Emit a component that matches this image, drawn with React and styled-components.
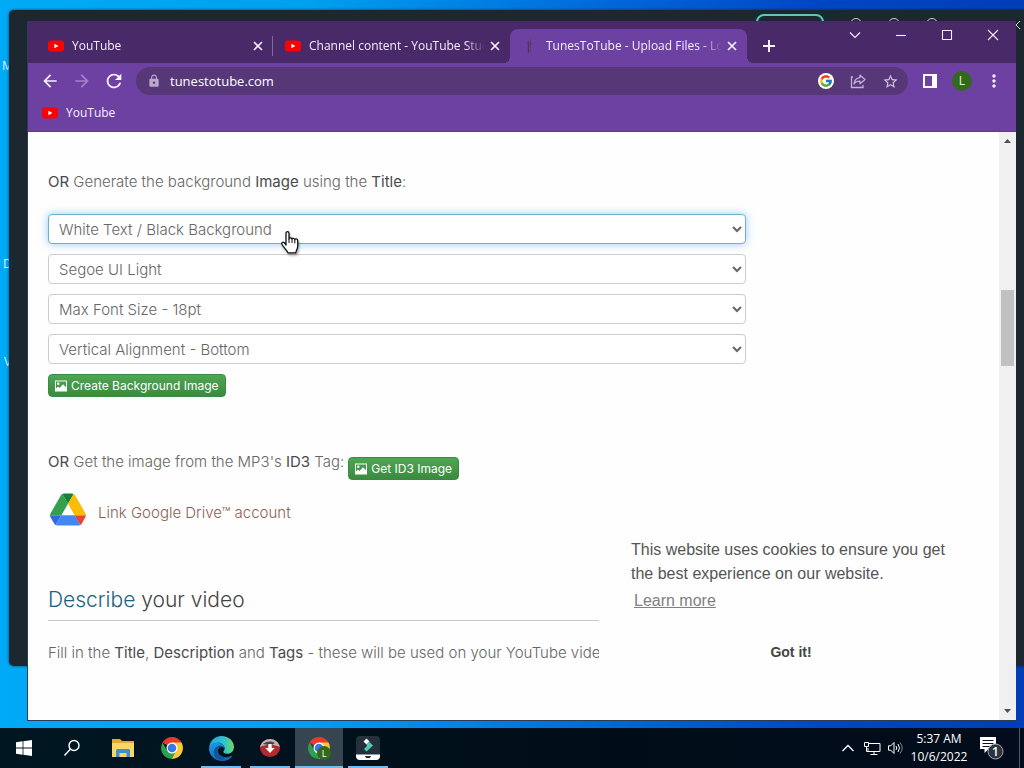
import React, { useState } from 'react'
import styled, { createGlobalStyle, css } from 'styled-components'
import {
  MdArrowBack,
  MdArrowForward,
  MdLock,
  MdMoreVert,
  MdRefresh,
  MdStarBorder,
} from 'react-icons/md'
import { FcGoogle } from 'react-icons/fc'

const uiFont = '"Open Sans", "Noto Sans", sans-serif'
const pageFont = 'Inter, "Open Sans", sans-serif'

const GlobalStyle = createGlobalStyle`
  *, *::before, *::after {
    box-sizing: border-box;
  }
  body {
    margin: 0;
    font-family: ${uiFont};
    font-size: 12px;
  }
  button {
    font-family: inherit;
    border: 0;
    padding: 0;
    background: none;
    color: inherit;
  }
  svg {
    display: block;
    flex: none;
  }
`

/* ---------- desktop ---------- */

const Screen = styled.div`
  display: flex;
  flex-direction: column;
  height: 100vh;
  overflow: hidden;
  background: linear-gradient(90deg, #00aaf6 0%, #00a0f0 30%, #0067da 60%, #0046c4 80%, #003eb8 100%);
`

const Desktop = styled.main`
  position: relative;
  flex: 1;
  min-height: 0;
  overflow: hidden;
`

const DesktopLabel = styled.span`
  position: absolute;
  left: ${props => props.$x}px;
  top: ${props => props.$y}px;
  line-height: 16px;
  color: #dff2ff;
`

const BackWindow = styled.div`
  position: absolute;
  inset: 10px -8px 62px 9px;
  background: #1c2730;
  border-radius: 5px;
  box-shadow: 0 0 3px rgba(0, 20, 40, 0.7);
`

const BackToolbar = styled.div`
  display: flex;
  justify-content: flex-end;
  gap: 26px;
  padding: 4px 11px 0 0;
`

const BackPill = styled.span`
  width: 68px;
  height: 24px;
  border: 2px solid #5fc4bd;
  border-radius: 8px;
`

const BackDot = styled.span`
  width: 12px;
  height: 12px;
  margin-top: 4px;
  border: 1px solid #c9d0d6;
  border-radius: 50%;
`

const BackClose = styled.svg`
  margin: 6px 0 0 47px;
`

const Browser = styled.section`
  position: absolute;
  inset: 21px 8px 7px 27px;
  display: flex;
  flex-direction: column;
  border: 1px solid #2b3a55;
  border-width: 0 0 1px 1px;
  background: #fff;
`

/* ---------- browser chrome ---------- */

const TabStrip = styled.div`
  display: flex;
  align-items: flex-end;
  height: 42px;
  padding-left: 8px;
  background: #4a2968;
  color: #f5ecff;
`

const activeTab = css`
  background: #6d41a2;

  &::before,
  &::after {
    content: '';
    position: absolute;
    bottom: 0;
    width: 6px;
    height: 6px;
  }
  &::before {
    right: 100%;
    background: radial-gradient(circle at 0 0, transparent 6px, #6d41a2 6px);
  }
  &::after {
    left: 100%;
    background: radial-gradient(circle at 100% 0, transparent 6px, #6d41a2 6px);
  }
`

const tabDivider = css`
  &::after {
    content: '';
    position: absolute;
    right: 0;
    top: 7px;
    width: 1px;
    height: 20px;
    background: #8169a0;
  }
`

const Tab = styled.div`
  position: relative;
  display: flex;
  align-items: center;
  flex: 0 1 237px;
  min-width: 0;
  height: 34px;
  padding: 0 7px 0 12px;
  border-radius: 8px 8px 0 0;
  ${props => props.$active && activeTab}
  ${props => props.$divider && tabDivider}
`

const TabTitle = styled.span`
  flex: 1;
  min-width: 0;
  margin: 0 2px 0 8px;
  line-height: 18px;
  white-space: nowrap;
  overflow: hidden;
  mask-image: linear-gradient(90deg, #000 calc(100% - 20px), transparent);
`

const IconButton = styled.button`
  display: flex;
  align-items: center;
  justify-content: center;
  flex: none;
  width: ${props => props.$w || 32}px;
  height: ${props => props.$h || 28}px;
  color: ${props => props.$color || '#f7f0ff'};
`

const WindowControls = styled.div`
  display: flex;
  align-self: flex-start;
  margin-left: auto;
`

const Toolbar = styled.div`
  display: flex;
  align-items: center;
  height: 36px;
  padding: 0 6px;
  background: #6d41a2;
`

const Omnibox = styled.div`
  display: flex;
  align-items: center;
  flex: 1;
  min-width: 0;
  height: 28px;
  margin: 0 6px;
  padding: 0 2px 0 11px;
  border-radius: 14px;
  background: #573778;
  color: #b9a9cb;
`

const Address = styled.input`
  flex: 1;
  min-width: 0;
  margin-left: 9px;
  padding: 0;
  border: 0;
  outline: 0;
  background: none;
  color: #fff;
  font: 13px/20px ${uiFont};
`

const Avatar = styled.span`
  width: 20px;
  height: 20px;
  border-radius: 50%;
  background: #33691e;
  color: #e8f3e0;
  font-size: 12px;
  line-height: 20px;
  text-align: center;
`

const Bookmarks = styled.div`
  display: flex;
  height: 33px;
  padding: 0 14px 5px;
  background: #6d41a2;
  border-bottom: 1px solid #64398f;
`

const Bookmark = styled.a`
  display: flex;
  align-items: center;
  gap: 8px;
  color: #f7f0ff;
  text-decoration: none;
`

/* ---------- page ---------- */

const Viewport = styled.div`
  position: relative;
  display: flex;
  flex: 1;
  min-height: 0;
`

const Page = styled.div`
  flex: 1;
  min-width: 0;
  overflow: hidden;
  padding: 40px 20px 0;
  background: #fefefe;
  color: #666;
  font: 300 15px/20px ${pageFont};

  strong {
    font-weight: 400;
    color: #4a4a4a;
  }
`

const Text = styled.p`
  margin: 0;
  white-space: nowrap;
`

const Form = styled.form`
  display: flex;
  flex-direction: column;
  align-items: flex-start;
  gap: 10px;
  max-width: 698px;
  margin: 22px 0 55px;
`

const Select = styled.select`
  width: 100%;
  height: 30px;
  padding: 4px 4px 4px 6px;
  border: 1px solid ${props => (props.$focus ? '#6fb0cf' : '#ccc')};
  border-radius: 4px;
  outline: 0;
  background-color: #fff;
  box-shadow: ${props => (props.$focus ? '0 0 8px rgba(82, 168, 236, 0.6)' : 'none')};
  color: #666;
  font: 300 15px/20px ${pageFont};
`

const GreenButton = styled.button`
  display: flex;
  align-items: center;
  gap: 4px;
  height: 23px;
  padding: 0 6px;
  border: 1px solid #3c8a40;
  border-radius: 4px;
  background: linear-gradient(#4fa653, #3b8a3f);
  color: #fff;
  font: 400 12px/20px ${pageFont};
`

const TagRow = styled.div`
  display: flex;
  gap: 4px;
  height: 28px;
  margin-bottom: 12px;

  ${GreenButton} {
    align-self: flex-end;
  }
`

const DriveLink = styled.a`
  display: flex;
  align-items: flex-end;
  gap: 12px;
  width: fit-content;
  height: 34px;
  padding: 0 2px;
  color: #8c5f57;
  line-height: 26px;
  text-decoration: none;
`

const Heading = styled.h2`
  margin: 54px 0 22px;
  border-bottom: 1px solid #c8c8c8;
  color: #444;
  font: 300 21px/40px ${pageFont};

  span {
    color: #1b6180;
  }
`

const Scrollbar = styled.div`
  display: flex;
  flex-direction: column;
  align-items: center;
  width: 17px;
  background: #f0f0f0;
`

const ScrollSpace = styled.div`
  flex: ${props => props.$grow} 1 0;
`

const Thumb = styled.div`
  width: 13px;
  height: 76px;
  background: #c1c1c1;
`

const CookieNotice = styled.aside`
  position: absolute;
  right: 17px;
  bottom: 0;
  width: 400px;
  height: 204px;
  padding: 22px 48px 0 32px;
  background: #fefefe;
  color: #555;
  font: 16px/24px "Liberation Sans", Arial, sans-serif;

  p {
    margin: 0;
  }
  a {
    display: inline-block;
    padding: 3px;
    color: #808080;
    text-decoration: underline;
  }
`

const GotIt = styled.button`
  display: block;
  width: 100%;
  margin-top: 21px;
  color: #444;
  font: bold 14px/30px "Liberation Sans", Arial, sans-serif;
`

const HandCursor = styled.svg`
  position: absolute;
  left: 252px;
  top: 98px;
  filter: drop-shadow(1px 2px 1px rgba(0, 0, 0, 0.35));
`

/* ---------- taskbar ---------- */

const Taskbar = styled.footer`
  display: flex;
  align-items: stretch;
  height: 40px;
  background: linear-gradient(90deg, #001722, #000d18 60%, #020c1c);
  color: #fff;
`

const TaskGroup = styled.div`
  display: flex;
  gap: ${props => props.$gap || 0}px;
  margin-right: 3px;
`

const TaskButton = styled.button`
  display: flex;
  flex-direction: column;
  align-items: center;
  justify-content: center;
  position: relative;
  width: 48px;
  background: ${props => (props.$active ? '#36454f' : 'transparent')};

  &::after {
    content: '';
    position: absolute;
    bottom: 0;
    width: ${props => (props.$active ? 48 : 40)}px;
    height: 2px;
    background: ${props => (props.$open ? '#76b9ed' : 'transparent')};
  }
`

const Tray = styled.div`
  display: flex;
  align-items: center;
  margin-left: auto;
  padding-right: 4px;
`

const Clock = styled.time`
  width: 62px;
  line-height: 18px;
  text-align: center;
`

const ShowDesktop = styled.span`
  width: 1px;
  height: 40px;
  margin-left: 7px;
  background: #4c5763;
`

/* ---------- drawings ---------- */

const YouTubeIcon = () => (
  <svg width="16" height="16" viewBox="0 0 16 16">
    <rect y="2.5" width="16" height="11" rx="3" fill="#f00" />
    <path d="M6.4 5.7v4.6l4-2.3z" fill="#fff" />
  </svg>
)

const TunesIcon = () => (
  <svg width="16" height="16" viewBox="0 0 16 16" stroke="#4c3a55" fill="none">
    <path d="M6.5 3v12" strokeWidth="1.4" />
    <path d="M8.5 1v12M4.5 5.5h6" opacity="0.6" />
  </svg>
)

const ShareIcon = () => (
  <svg width="18" height="18" viewBox="0 0 18 18" fill="none" stroke="#c3b1d6" strokeWidth="1.3">
    <path d="M4 5H2.5v10.500H14V13" />
    <path d="M11 3.200l5 4.300-5 4.300V9.200C8 9.200 6.200 10 5 12c.3-3.400 2.200-6 6-6.400z" strokeLinejoin="round" />
  </svg>
)

const SidePanelIcon = () => (
  <svg width="14" height="14" viewBox="0 0 14 14">
    <rect x="1" y="1" width="12" height="12" fill="none" stroke="#fff" strokeWidth="2" />
    <rect x="9" width="5" height="14" fill="#fff" />
  </svg>
)

const PictureIcon = () => (
  <svg width="12" height="12" viewBox="0 0 12 12">
    <rect x="0.5" y="1" width="11" height="10" fill="none" stroke="#fff" />
    <circle cx="3.3" cy="3.8" r="1.2" fill="#fff" />
    <path d="M1 11V8.500l2-2 1.500 1.500L8 4.200l3 3V11z" fill="#fff" />
  </svg>
)

const DriveIcon = () => (
  <svg width="36" height="33" viewBox="0 0 87.3 78">
    <path d="M6.600 66.850l3.850 6.650c.8 1.400 1.950 2.500 3.300 3.300L27.500 53H0c0 1.550.4 3.100 1.200 4.500z" fill="#2f6be0" />
    <path d="M43.650 25L29.900 1.200c-1.350.8-2.500 1.900-3.300 3.300L1.200 48.500A9 9 0 0 0 0 53h27.500z" fill="#34a04f" />
    <path d="M73.550 76.800c1.350-.8 2.500-1.900 3.300-3.300l8.850-16c.8-1.400 1.200-2.950 1.200-4.500H59.800l5.850 11.500z" fill="#ea4335" />
    <path d="M43.650 25L57.400 1.200C56.050.4 54.500 0 52.900 0H34.400c-1.600 0-3.150.45-4.500 1.200z" fill="#188038" />
    <path d="M59.800 53H27.500L13.750 76.800c1.350.8 2.900 1.200 4.500 1.200h50.800c1.600 0 3.150-.45 4.500-1.200z" fill="#4285f4" />
    <path d="M73.400 26.500L60.700 4.500c-.8-1.400-1.950-2.500-3.300-3.300L43.650 25 59.800 53h27.450c0-1.550-.4-3.100-1.200-4.500z" fill="#fbbc04" />
  </svg>
)

const WindowsLogo = () => (
  <svg width="16" height="16" viewBox="0 0 16 16" fill="#fff">
    <path d="M0 2.200l6.600-.9v6.300H0zM7.400 1.200L16 0v7.600H7.400zM0 8.400h6.600v6.300L0 13.800zM7.400 8.400H16V16l-8.600-1.200z" />
  </svg>
)

const SearchIcon = () => (
  <svg width="18" height="18" viewBox="0 0 18 18" fill="none" stroke="#fff" strokeWidth="1.4">
    <circle cx="11" cy="6.5" r="5" />
    <path d="M7.500 10L1.500 16.500" />
  </svg>
)

const FolderIcon = () => (
  <svg width="22" height="18" viewBox="0 0 22 18">
    <path d="M0 0h8l2 2h12v4H0z" fill="#e8a92f" />
    <path d="M0 4h22v14H0z" fill="#fbd568" />
    <path d="M4 18v-6.500a1.500 1.500 0 0 1 1.500-1.500h11a1.500 1.500 0 0 1 1.500 1.500V18h-3.500v-4h-7v4z" fill="#3f8fc9" />
  </svg>
)

const ChromeIcon = ({ badge }) => (
  <svg width="24" height="24" viewBox="0 0 24 24">
    <path d="M12 12L2.500 6.500A11 11 0 0 1 21.500 6.500z" fill="#e33b2e" />
    <path d="M12 12V6.500h9.500A11 11 0 0 1 12 23z" fill="#fcc934" />
    <path d="M2.500 6.500L7.300 14.700 12 17l3.700-1.500L12 23A11 11 0 0 1 2.500 6.500z" fill="#2ba24c" />
    <circle cx="12" cy="12" r="5.5" fill="#fff" />
    <circle cx="12" cy="12" r="4.3" fill="#3b78e7" />
    {badge && (
      <>
        <circle cx="17" cy="17" r="7" fill="#33691e" />
        <text x="17" y="20.5" fill="#fff" fontSize="9" textAnchor="middle">{badge}</text>
      </>
    )}
  </svg>
)

const EdgeIcon = () => (
  <svg width="25" height="25" viewBox="0 0 24 24">
    <defs>
      <linearGradient id="edgeTop" x1="0" y1="0.5" x2="1" y2="0.5">
        <stop offset="0" stopColor="#1fa6e0" />
        <stop offset="0.6" stopColor="#35c1d0" />
        <stop offset="1" stopColor="#66dc60" />
      </linearGradient>
      <linearGradient id="edgeBody" x1="0" y1="0" x2="0.6" y2="1">
        <stop offset="0" stopColor="#1b9de2" />
        <stop offset="1" stopColor="#1567b8" />
      </linearGradient>
    </defs>
    <path d="M0 12C.5 5 5.500 0 12 0c7 0 12 5 12 10.500 0 4-3 6.500-6.500 6.500-2.500 0-3.800-.8-3.800-1.800 0-.8 1.300-1.200 1.300-3.200C15 9 12 6.500 8.500 6.500 4.500 6.500 1.500 8.500 0 12z" fill="url(#edgeTop)" />
    <path d="M0 12c1-3.500 4-5.500 8-5.500 4 0 7 2.500 7 5.500-.5-1-1.700-1.700-3-1.700-2 0-3.500 1.700-3.500 4.200 0 3.500 3.500 6 7.500 6 2.500 0 4.500-.8 5.500-1.500.5-.3.900.1.600.6C20 22.500 16.500 24 12.500 24 5.500 24 0 18.500 0 12z" fill="url(#edgeBody)" />
    <path d="M8.500 14.500c0 3.500 3.500 6 7.500 6-1.500 2-3.500 3-5 3C7 22.500 4.500 19 4.500 15.500c0-3 2-5.200 4.500-6.200 1.300-.4 4.500-.3 6 2.700-.5-1-1.700-1.700-3-1.700-2 0-3.500 1.700-3.500 4.200z" fill="#125699" />
  </svg>
)

const DownloaderIcon = () => (
  <svg width="22" height="20" viewBox="0 0 22 20">
    <ellipse cx="11" cy="10" rx="10" ry="9" fill="#b5292e" />
    <path d="M1.200 9C2 4 6.500 1 11 1s9 3 9.800 8c-2.500-1.500-6-2-9.800-2s-7.300.5-9.800 2z" fill="#b9b5b6" />
    <path d="M4 6C7 3 13 2.500 16 5l-4 2.500z" fill="#4a4144" />
    <path d="M9.300 6h3.400v4h3L11 15l-4.700-5h3z" fill="#fff" />
  </svg>
)

const FilmoraIcon = () => (
  <svg width="24" height="24" viewBox="0 0 24 24">
    <rect width="24" height="24" rx="4" fill="#24313c" />
    <path d="M0 18.500h24V20a4 4 0 0 1-4 4H4a4 4 0 0 1-4-4z" fill="#fff" />
    <path d="M7.500 5.500l3-3 3 3-3 3z" fill="#fff" />
    <path d="M10.500 8.500l3-2.500 3.500 3.500-6.500 6-2.500-2.500 3-3z" fill="#55c8b8" />
    <path d="M9 20h6l-1 2h-4z" fill="#24313c" />
  </svg>
)

const ChevronUp = () => (
  <svg width="12" height="8" viewBox="0 0 12 8" fill="none" stroke="#fff" strokeWidth="1.3">
    <path d="M0.500 7L6 1.500 11.500 7" />
  </svg>
)

const NetworkIcon = () => (
  <svg width="17" height="15" viewBox="0 0 17 15" fill="none" stroke="#fff">
    <path d="M5 2.500h11v8H4V7M10 10.500v3M6.500 13.500h7" />
    <path d="M0.500 1.500h4v4h-4zM2.500 5.500v5h1.500" />
  </svg>
)

const SpeakerIcon = () => (
  <svg width="16" height="14" viewBox="0 0 16 14" fill="none" stroke="#fff">
    <path d="M0.500 4.800h2.300L6 1.500v11L2.800 9.200H.5z" />
    <path d="M8 5q1.500 2 0 4M10 3q3 4 0 8" />
    <path d="M12 1.500q4.500 5.500 0 11" stroke="#7f8791" />
  </svg>
)

const NotificationIcon = () => (
  <svg width="25" height="26" viewBox="0 0 25 26">
    <path d="M1 2h16v12H9.500L5.500 18v-4H1z" fill="#fff" />
    <path d="M3.500 5.500h11M3.500 8.500h11M3.500 11.500h7" stroke="#0a1420" />
    <circle cx="16.5" cy="16.5" r="7.5" fill="#2c343e" stroke="#a5acb4" />
    <text x="16.5" y="20.5" fill="#fff" fontSize="12" fontWeight="600" textAnchor="middle">1</text>
  </svg>
)

const LineGlyph = ({ d, weight = 1.1 }) => (
  <svg width="12" height="12" viewBox="0 0 12 12" fill="none" stroke="#f7f0ff" strokeWidth={weight}>
    <path d={d} />
  </svg>
)

const tabs = [
  { title: 'YouTube', icon: <YouTubeIcon />, divider: true },
  { title: 'Channel content - YouTube Studio', icon: <YouTubeIcon /> },
  { title: 'TunesToTube - Upload Files - Logged in', icon: <TunesIcon />, active: true },
]

const controls = [
  ['Search tabs', 'M1 3.500l5 5 5-5'],
  ['Minimize', 'M1 6.500h10'],
  ['Maximize', 'M1.500 1.500h9v9h-9z'],
  ['Close window', 'M1 1l10 10M11 1L1 11'],
]

const imageOptions = [
  { label: 'Colours', value: 'White Text / Black Background' },
  { label: 'Font', value: 'Segoe UI Light' },
  { label: 'Font size', value: 'Max Font Size - 18pt' },
  { label: 'Alignment', value: 'Vertical Alignment - Bottom' },
]

const apps = [
  { name: 'File Explorer', icon: <FolderIcon /> },
  { name: 'Google Chrome', icon: <ChromeIcon /> },
  { name: 'Microsoft Edge', icon: <EdgeIcon />, open: true },
  { name: 'Downloader', icon: <DownloaderIcon />, open: true },
  { name: 'Chrome profile', icon: <ChromeIcon badge="L" />, open: true, active: true },
  { name: 'Filmora', icon: <FilmoraIcon />, open: true },
]

const BrowserChrome = () => {
  const [url, setUrl] = useState('tunestotube.com')

  return (
    <header>
      <TabStrip>
        {tabs.map(tab => (
          <Tab key={tab.title} $active={tab.active} $divider={tab.divider}>
            {tab.icon}
            <TabTitle>{tab.title}</TabTitle>
            <IconButton $w={16} $h={16} aria-label="Close tab">
              <LineGlyph d="M2 2l8 8M10 2L2 10" weight={1.7} />
            </IconButton>
          </Tab>
        ))}
        <IconButton $w={44} $h={34} aria-label="New tab">
          <LineGlyph d="M6 0v12M0 6h12" weight={2} />
        </IconButton>
        <WindowControls>
          {controls.map(([name, d]) => (
            <IconButton key={name} $w={46} $h={28} aria-label={name}><LineGlyph d={d} /></IconButton>
          ))}
        </WindowControls>
      </TabStrip>
      <Toolbar>
        <IconButton aria-label="Back"><MdArrowBack size={20} /></IconButton>
        <IconButton aria-label="Forward" $color="#a383c6"><MdArrowForward size={20} /></IconButton>
        <IconButton aria-label="Reload"><MdRefresh size={22} /></IconButton>
        <Omnibox>
          <MdLock size={14} />
          <Address aria-label="Address" value={url} onChange={e => setUrl(e.target.value)} />
          <IconButton aria-label="Google">
            <svg width="16" height="16" viewBox="0 0 16 16">
              <circle cx="8" cy="8" r="8" fill="#fff" />
              <FcGoogle x="1" y="1" size={14} />
            </svg>
          </IconButton>
          <IconButton aria-label="Share"><ShareIcon /></IconButton>
          <IconButton aria-label="Bookmark" $color="#d3c3e4"><MdStarBorder size={17} /></IconButton>
        </Omnibox>
        <IconButton aria-label="Side panel"><SidePanelIcon /></IconButton>
        <IconButton aria-label="Profile"><Avatar>L</Avatar></IconButton>
        <IconButton aria-label="Menu"><MdMoreVert size={20} /></IconButton>
      </Toolbar>
      <Bookmarks>
        <Bookmark href="#youtube"><YouTubeIcon />YouTube</Bookmark>
      </Bookmarks>
    </header>
  )
}

const TunesPage = () => (
  <Page>
    <Text><strong>OR</strong> Generate the background <strong>Image</strong> using the <strong>Title</strong>:</Text>
    <Form onSubmit={e => e.preventDefault()}>
      {imageOptions.map((option, i) => (
        <Select key={option.label} aria-label={option.label} $focus={i === 0}>
          <option>{option.value}</option>
        </Select>
      ))}
      <GreenButton><PictureIcon />Create Background Image</GreenButton>
    </Form>
    <TagRow>
      <Text><strong>OR</strong> Get the image from the MP3's <strong>ID3</strong> Tag:</Text>
      <GreenButton><PictureIcon />Get ID3 Image</GreenButton>
    </TagRow>
    <DriveLink href="#drive"><DriveIcon />Link Google Drive™ account</DriveLink>
    <Heading><span>Describe</span> your video</Heading>
    <Text>
      Fill in the <strong>Title</strong>, <strong>Description</strong> and <strong>Tags</strong> - these will be used on your YouTube video.
    </Text>
  </Page>
)

const App = () => {
  return (
    <Screen>
      <GlobalStyle />
      <Desktop>
        <DesktopLabel $x={2} $y={58}>M</DesktopLabel>
        <DesktopLabel $x={3} $y={256}>D</DesktopLabel>
        <DesktopLabel $x={4} $y={354}>V</DesktopLabel>
        <BackWindow>
          <BackToolbar>
            <BackPill />
            <BackDot />
            <BackDot />
            <BackDot />
            <BackClose width="10" height="10" viewBox="0 0 10 10" stroke="#c9d0d6">
              <path d="M1 1l8 8M9 1L1 9" />
            </BackClose>
          </BackToolbar>
        </BackWindow>
        <Browser>
          <BrowserChrome />
          <Viewport>
            <TunesPage />
            <Scrollbar>
              <svg width="17" height="17" viewBox="0 0 17 17"><path d="M5 11l3.500-4 3.500 4z" fill="#505050" /></svg>
              <ScrollSpace $grow={141} />
              <Thumb />
              <ScrollSpace $grow={337} />
              <svg width="17" height="17" viewBox="0 0 17 17"><path d="M5 6l3.500 4L12 6z" fill="#505050" /></svg>
            </Scrollbar>
            <CookieNotice>
              <p>This website uses cookies to ensure you get the best experience on our website.</p>
              <a href="#cookies">Learn more</a>
              <GotIt>Got it!</GotIt>
            </CookieNotice>
            <HandCursor width="20" height="26" viewBox="0 0 20 26">
              <path
                d="M6 15V3.200C6 1 9 1 9 3.200V9c0-1.600 3-1.600 3 .3 0-1.500 2.800-1.400 2.800.5 0-1.300 2.900-1.200 2.900.8v5.500c0 3-1.500 4-2 6.800H8c-.8-2.500-4-5-6-8.400-.8-1.800 1-3 2.300-1.800z"
                fill="#fff"
                stroke="#111"
                strokeWidth="1.3"
                strokeLinejoin="round"
              />
              <path d="M9 9v4M12 9.500V13M14.800 10v3.500" stroke="#111" />
            </HandCursor>
          </Viewport>
        </Browser>
      </Desktop>
      <Taskbar>
        <TaskGroup>
          <TaskButton aria-label="Start"><WindowsLogo /></TaskButton>
          <TaskButton aria-label="Search"><SearchIcon /></TaskButton>
        </TaskGroup>
        <TaskGroup $gap={1}>
          {apps.map(app => (
            <TaskButton key={app.name} aria-label={app.name} $open={app.open} $active={app.active}>
              {app.icon}
            </TaskButton>
          ))}
        </TaskGroup>
        <Tray>
          <IconButton $w={24} aria-label="Hidden icons"><ChevronUp /></IconButton>
          <IconButton $w={24} aria-label="Network"><NetworkIcon /></IconButton>
          <IconButton $w={24} aria-label="Volume"><SpeakerIcon /></IconButton>
          <Clock>5:37 AM<br />10/6/2022</Clock>
          <IconButton $w={42} aria-label="Notifications"><NotificationIcon /></IconButton>
          <ShowDesktop />
        </Tray>
      </Taskbar>
    </Screen>
  )
}

export default App
